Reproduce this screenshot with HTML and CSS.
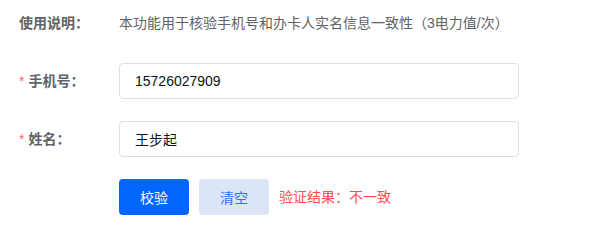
FILE: index.html
```html
<!DOCTYPE html>
<html lang="zh-CN">
<head>
<meta charset="utf-8">
<link rel="stylesheet" href="styles.css">
</head>
<body>
<form class="form">
  <div class="row">
    <label class="label">使用说明：</label>
    <div class="content desc">本功能用于核验手机号和办卡人实名信息一致性（3电力值/次）</div>
  </div>
  <div class="row">
    <label class="label"><span class="star">*</span>手机号：</label>
    <div class="content"><input class="input" type="text" value="15726027909"></div>
  </div>
  <div class="row">
    <label class="label"><span class="star">*</span>姓名：</label>
    <div class="content"><input class="input" type="text" value="王步起"></div>
  </div>
  <div class="row">
    <div class="label"></div>
    <div class="content actions">
      <button type="button" class="btn btn-primary">校验</button>
      <button type="button" class="btn btn-light">清空</button>
      <span class="result">验证结果：不一致</span>
    </div>
  </div>
</form>
</body>
</html>
```

FILE: styles.css
```css
html, body {
  margin: 0;
  padding: 0;
  background: #fff;
}
body {
  font-family: "Liberation Sans", "Noto Sans CJK SC", sans-serif;
  font-size: 14px;
  color: #606266;
}
.form {
  padding: 5px 0 0 19px;
  display: flex;
  flex-direction: column;
  gap: 22px;
}
.row {
  display: flex;
  align-items: center;
  height: 36px;
}
.label {
  width: 100px;
  flex: none;
  font-weight: bold;
  color: #606266;
  line-height: 36px;
}
.star {
  color: #f56c6c;
  margin-right: 4px;
  font-weight: normal;
}
.content {
  flex: none;
  line-height: 36px;
}
.desc {
  color: #606266;
}
.input {
  box-sizing: border-box;
  width: 400px;
  height: 36px;
  border: 1px solid #dcdfe6;
  border-radius: 4px;
  padding: 0 15px;
  font-family: "Liberation Sans", "Noto Sans CJK SC", sans-serif;
  font-size: 14px;
  color: #111;
  outline: none;
  background: #fff;
}
.actions {
  display: flex;
  align-items: center;
  gap: 10px;
}
.btn {
  box-sizing: border-box;
  width: 70px;
  height: 36px;
  border: none;
  border-radius: 4px;
  font-family: "Liberation Sans", "Noto Sans CJK SC", sans-serif;
  font-size: 14px;
  padding: 0;
  cursor: pointer;
}
.btn-primary {
  background: #0066ff;
  color: #fff;
}
.btn-light {
  background: #dce5f7;
  color: #3370ff;
}
.result {
  color: #ff4d4f;
}
```
